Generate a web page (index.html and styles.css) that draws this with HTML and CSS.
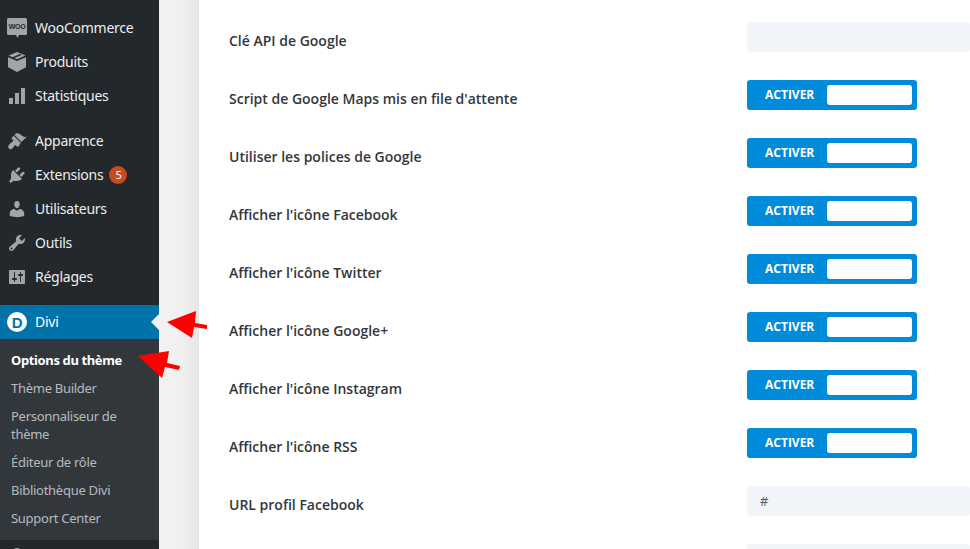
FILE: index.html
```html
<!DOCTYPE html>
<html lang="fr">
<head>
  <meta charset="UTF-8" />
  <title>Options du thème</title>
  <link rel="stylesheet" href="styles.css">
</head>
<body>
  <nav class="sidebar">
    <ul class="menu">
      <li class="menu-item">
        <svg class="icon" viewBox="0 0 20 20"><path d="M1.500 0h17A1.500 1.500 0 0 1 20 1.500v14a1.500 1.500 0 0 1-1.500 1.500H12l-1.500 3L9 17H1.500A1.500 1.500 0 0 1 0 15.500v-14A1.500 1.500 0 0 1 1.500 0z"/><text class="woo-mark" x="10" y="11">WOO</text></svg>
        <span>WooCommerce</span>
      </li>
      <li class="menu-item">
        <svg class="icon" viewBox="0 0 20 20"><path d="M10 0l8.500 3.600-8.500 3.700-2.800-1.200 7.500-3.200-1.700-.8-7.500 3.200-3.900-1.700zM1 5.200l2.600 1.100 6.400 2.800 9-3.900v10.100L10 20l-9-4.700z"/></svg>
        <span>Produits</span>
      </li>
      <li class="menu-item group-end">
        <svg class="icon" viewBox="0 0 20 20"><path d="M18 18V2h-4v16h4zm-6 0V7H8v11h4zm-6 0v-6H2v6h4z"/></svg>
        <span>Statistiques</span>
      </li>
      <li class="menu-item">
        <svg class="icon" viewBox="0 0 20 20"><path d="M14.480 11.060L7.410 3.990l1.500-1.500c.5-.56 2.300-.47 3.510.32 1.210.8 1.430 1.280 2.910 2.100 1.180.64 2.450 1.260 4.450.85zm-.71.71L6.700 4.700 4.930 6.470c-.39.39-.39 1.020 0 1.410l1.060 1.060c.39.39.39 1.030 0 1.420-.6.6-1.430 1.110-2.210 1.690-.35.26-.7.53-1.010.84-1.340 1.320-1.810 2.480-1.450 3.510.58 1.660 2.730 2.400 3.780 1.350.31-.31.58-.66.84-1.010.58-.78 1.090-1.610 1.690-2.210.39-.39 1.030-.39 1.420 0l1.060 1.060c.39.39 1.020.39 1.410 0z"/></svg>
        <span>Apparence</span>
      </li>
      <li class="menu-item">
        <svg class="icon" viewBox="0 0 20 20"><path d="M13.110 4.360L9.870 7.600 8 5.730l3.240-3.240c.35-.34 1.050-.2 1.560.32.52.51.66 1.210.31 1.550zm-8 1.770l.91-1.120 9.010 9.010-1.190.84c-.71.71-2.630 1.160-3.820 1.160H6.140L4.900 17.260c-.59.59-1.540.59-2.120 0-.59-.58-.59-1.530 0-2.120l1.240-1.240v-3.880c0-1.130.4-3.190 1.090-3.890zm7.260 3.970l3.240-3.240c.34-.35 1.040-.21 1.550.31.52.51.66 1.210.31 1.550l-3.240 3.250z"/></svg>
        <span>Extensions</span>
        <b class="count">5</b>
      </li>
      <li class="menu-item">
        <svg class="icon" viewBox="0 0 20 20"><path d="M10 9.250c-2.270 0-2.730-3.440-2.730-3.440C7 4.020 7.820 2 9.970 2c2.160 0 2.980 2.020 2.710 3.810 0 0-.41 3.440-2.680 3.440zm0 2.570L12.720 10c2.390 0 4.520 2.330 4.520 4.530v2.490s-3.650 1.130-7.240 1.130c-3.650 0-7.240-1.130-7.240-1.130v-2.490c0-2.250 1.940-4.480 4.470-4.480z"/></svg>
        <span>Utilisateurs</span>
      </li>
      <li class="menu-item">
        <svg class="icon" viewBox="0 0 20 20"><path d="M16.680 9.770c-1.340 1.340-3.300 1.670-4.950.99l-5.410 6.520c-.99.99-2.590.99-3.580 0s-.99-2.590 0-3.570l6.520-5.420c-.68-1.650-.35-3.610.99-4.950 1.280-1.280 3.120-1.620 4.720-1.060l-2.890 2.890 2.820 2.820 2.860-2.870c.53 1.580.18 3.390-1.080 4.670zM3.810 16.210c.4.39 1.040.39 1.430 0 .4-.4.4-1.040 0-1.430-.39-.4-1.030-.4-1.430 0-.39.39-.39 1.030 0 1.430z"/></svg>
        <span>Outils</span>
      </li>
      <li class="menu-item group-end">
        <svg class="icon" viewBox="0 0 20 20"><path d="M18 16V4c0-.55-.45-1-1-1H3c-.55 0-1 .45-1 1v12c0 .55.45 1 1 1h14c.55 0 1-.45 1-1zM8 11h1c.55 0 1 .45 1 1s-.45 1-1 1H8v1.500c0 .28-.22.5-.5.5s-.5-.22-.5-.5V13H6c-.55 0-1-.45-1-1s.45-1 1-1h1V5.500c0-.28.22-.5.5-.5s.5.22.5.5V11zm5-2h-1c-.55 0-1-.45-1-1s.45-1 1-1h1V5.500c0-.28.22-.5.5-.5s.5.22.5.5V7h1c.55 0 1 .45 1 1s-.45 1-1 1h-1v5.500c0 .28-.22.5-.5.5s-.5-.22-.5-.5V9z"/></svg>
        <span>Réglages</span>
      </li>
      <li class="menu-item current">
        <svg class="icon" viewBox="0 0 20 20"><circle class="divi-disc" cx="10" cy="10" r="10"/><text class="divi-mark" x="10" y="15.500">D</text></svg>
        <span>Divi</span>
      </li>
    </ul>
    <ul class="submenu">
      <li class="active">Options du thème</li>
      <li>Thème Builder</li>
      <li>Personnaliseur de thème</li>
      <li>Éditeur de rôle</li>
      <li>Bibliothèque Divi</li>
      <li>Support Center</li>
    </ul>
    <div class="menu-item">
      <svg class="icon" viewBox="0 0 20 20"><circle cx="10" cy="6" r="5"/></svg>
    </div>
  </nav>

  <main class="panel">
    <div class="row">
      <label class="row-label">Clé API de Google</label>
      <input class="text-field" type="text" value="">
    </div>
    <div class="row">
      <label class="row-label">Script de Google Maps mis en file d'attente</label>
      <div class="toggle"><span>ACTIVER</span><i class="knob"></i></div>
    </div>
    <div class="row">
      <label class="row-label">Utiliser les polices de Google</label>
      <div class="toggle"><span>ACTIVER</span><i class="knob"></i></div>
    </div>
    <div class="row">
      <label class="row-label">Afficher l'icône Facebook</label>
      <div class="toggle"><span>ACTIVER</span><i class="knob"></i></div>
    </div>
    <div class="row">
      <label class="row-label">Afficher l'icône Twitter</label>
      <div class="toggle"><span>ACTIVER</span><i class="knob"></i></div>
    </div>
    <div class="row">
      <label class="row-label">Afficher l'icône Google+</label>
      <div class="toggle"><span>ACTIVER</span><i class="knob"></i></div>
    </div>
    <div class="row">
      <label class="row-label">Afficher l'icône Instagram</label>
      <div class="toggle"><span>ACTIVER</span><i class="knob"></i></div>
    </div>
    <div class="row">
      <label class="row-label">Afficher l'icône RSS</label>
      <div class="toggle"><span>ACTIVER</span><i class="knob"></i></div>
    </div>
    <div class="row">
      <label class="row-label">URL profil Facebook</label>
      <input class="text-field" type="text" value="#">
    </div>
    <div class="row">
      <label class="row-label"></label>
      <input class="text-field" type="text" value="">
    </div>
  </main>

  <!-- red annotation arrows drawn over the screenshot -->
  <svg class="arrows" viewBox="0 0 970 549">
    <polygon points="167,322 196,311 195,323 207,325 207,329 194,327 192,338"/>
    <polygon points="138,356 169,351 167,363 180,366 179,370 165,367 162,378"/>
  </svg>
</body>
</html>
```

FILE: styles.css
```css
* {
  margin: 0;
  padding: 0;
  box-sizing: border-box;
}

html, body {
  height: 549px;
  overflow: hidden;
}

body {
  display: flex;
  position: relative;
  background: linear-gradient(to right, #f1f1f1 181px, #e5e5e5 199px);
  font-family: "Noto Sans", sans-serif;
}

ul {
  list-style: none;
}

.sidebar {
  width: 159px;
  flex-shrink: 0;
  margin-right: 40px;
  padding-top: 11px;
  background: #23282d;
  color: #eeeeee;
  font-size: 14px;
  letter-spacing: -0.25px;
}

.menu-item {
  display: flex;
  align-items: center;
  height: 34px;
  padding-left: 7px;
  gap: 8px;
}

.menu-item > span {
  padding-bottom: 2px;
}

.menu-item.group-end {
  margin-bottom: 11px;
}

.icon {
  width: 20px;
  height: 20px;
  flex-shrink: 0;
  fill: #a0a5aa;
}

.woo-mark {
  font-family: "Liberation Sans", sans-serif;
  font-size: 7px;
  font-weight: bold;
  text-anchor: middle;
  fill: #23282d;
}

.count {
  width: 18px;
  height: 18px;
  margin-left: -2px;
  border-radius: 50%;
  background: #ca4a1f;
  color: #fff;
  font-size: 11px;
  font-weight: 400;
  line-height: 18px;
  text-align: center;
}

.current {
  position: relative;
  background: #0073aa;
  color: #fff;
}

.current::after {
  content: "";
  position: absolute;
  right: 0;
  top: 9px;
  border: 8px solid transparent;
  border-right-color: #f1f1f1;
  border-left-width: 0;
}

.divi-disc {
  fill: #fff;
}

.divi-mark {
  font-family: "Liberation Sans", sans-serif;
  font-size: 15px;
  font-weight: bold;
  text-anchor: middle;
  fill: #0073aa;
}

.submenu {
  height: 201px;
  padding-top: 7px;
  background: #32373c;
  color: rgba(240, 245, 250, 0.7);
  font-size: 13px;
  line-height: 18px;
  letter-spacing: -0.28px;
}

.submenu li {
  padding: 5px 11px;
}

.submenu .active {
  color: #fff;
  font-weight: 700;
  letter-spacing: -0.37px;
}

.panel {
  flex: 1;
  padding-top: 22px;
  background: #fff;
  font-family: "Open Sans", sans-serif;
}

.row {
  display: flex;
  align-items: flex-start;
  height: 30px;
  margin-bottom: 28px;
  padding-left: 30px;
}

.row-label {
  width: 518px;
  flex-shrink: 0;
  padding-top: 9px;
  color: #32373c;
  font-size: 14px;
  font-weight: 600;
  line-height: 20px;
}

.text-field {
  flex: 1;
  min-width: 0;
  height: 30px;
  padding: 0 13px;
  border: 0;
  border-radius: 3px;
  background: #f1f5f9;
  color: #4c5866;
  font-family: inherit;
  font-size: 13px;
}

.toggle {
  display: flex;
  align-items: center;
  justify-content: space-between;
  width: 170px;
  height: 30px;
  padding: 5px 5px 5px 18px;
  border-radius: 3px;
  background: #008bdb;
  color: #fff;
  font-size: 12px;
  font-weight: 700;
}

.toggle span {
  padding-bottom: 2px;
}

.knob {
  width: 85px;
  height: 20px;
  border-radius: 3px;
  background: #fff;
}

.arrows {
  position: absolute;
  left: 0;
  top: 0;
  width: 970px;
  height: 549px;
  fill: #ff0000;
}
```
